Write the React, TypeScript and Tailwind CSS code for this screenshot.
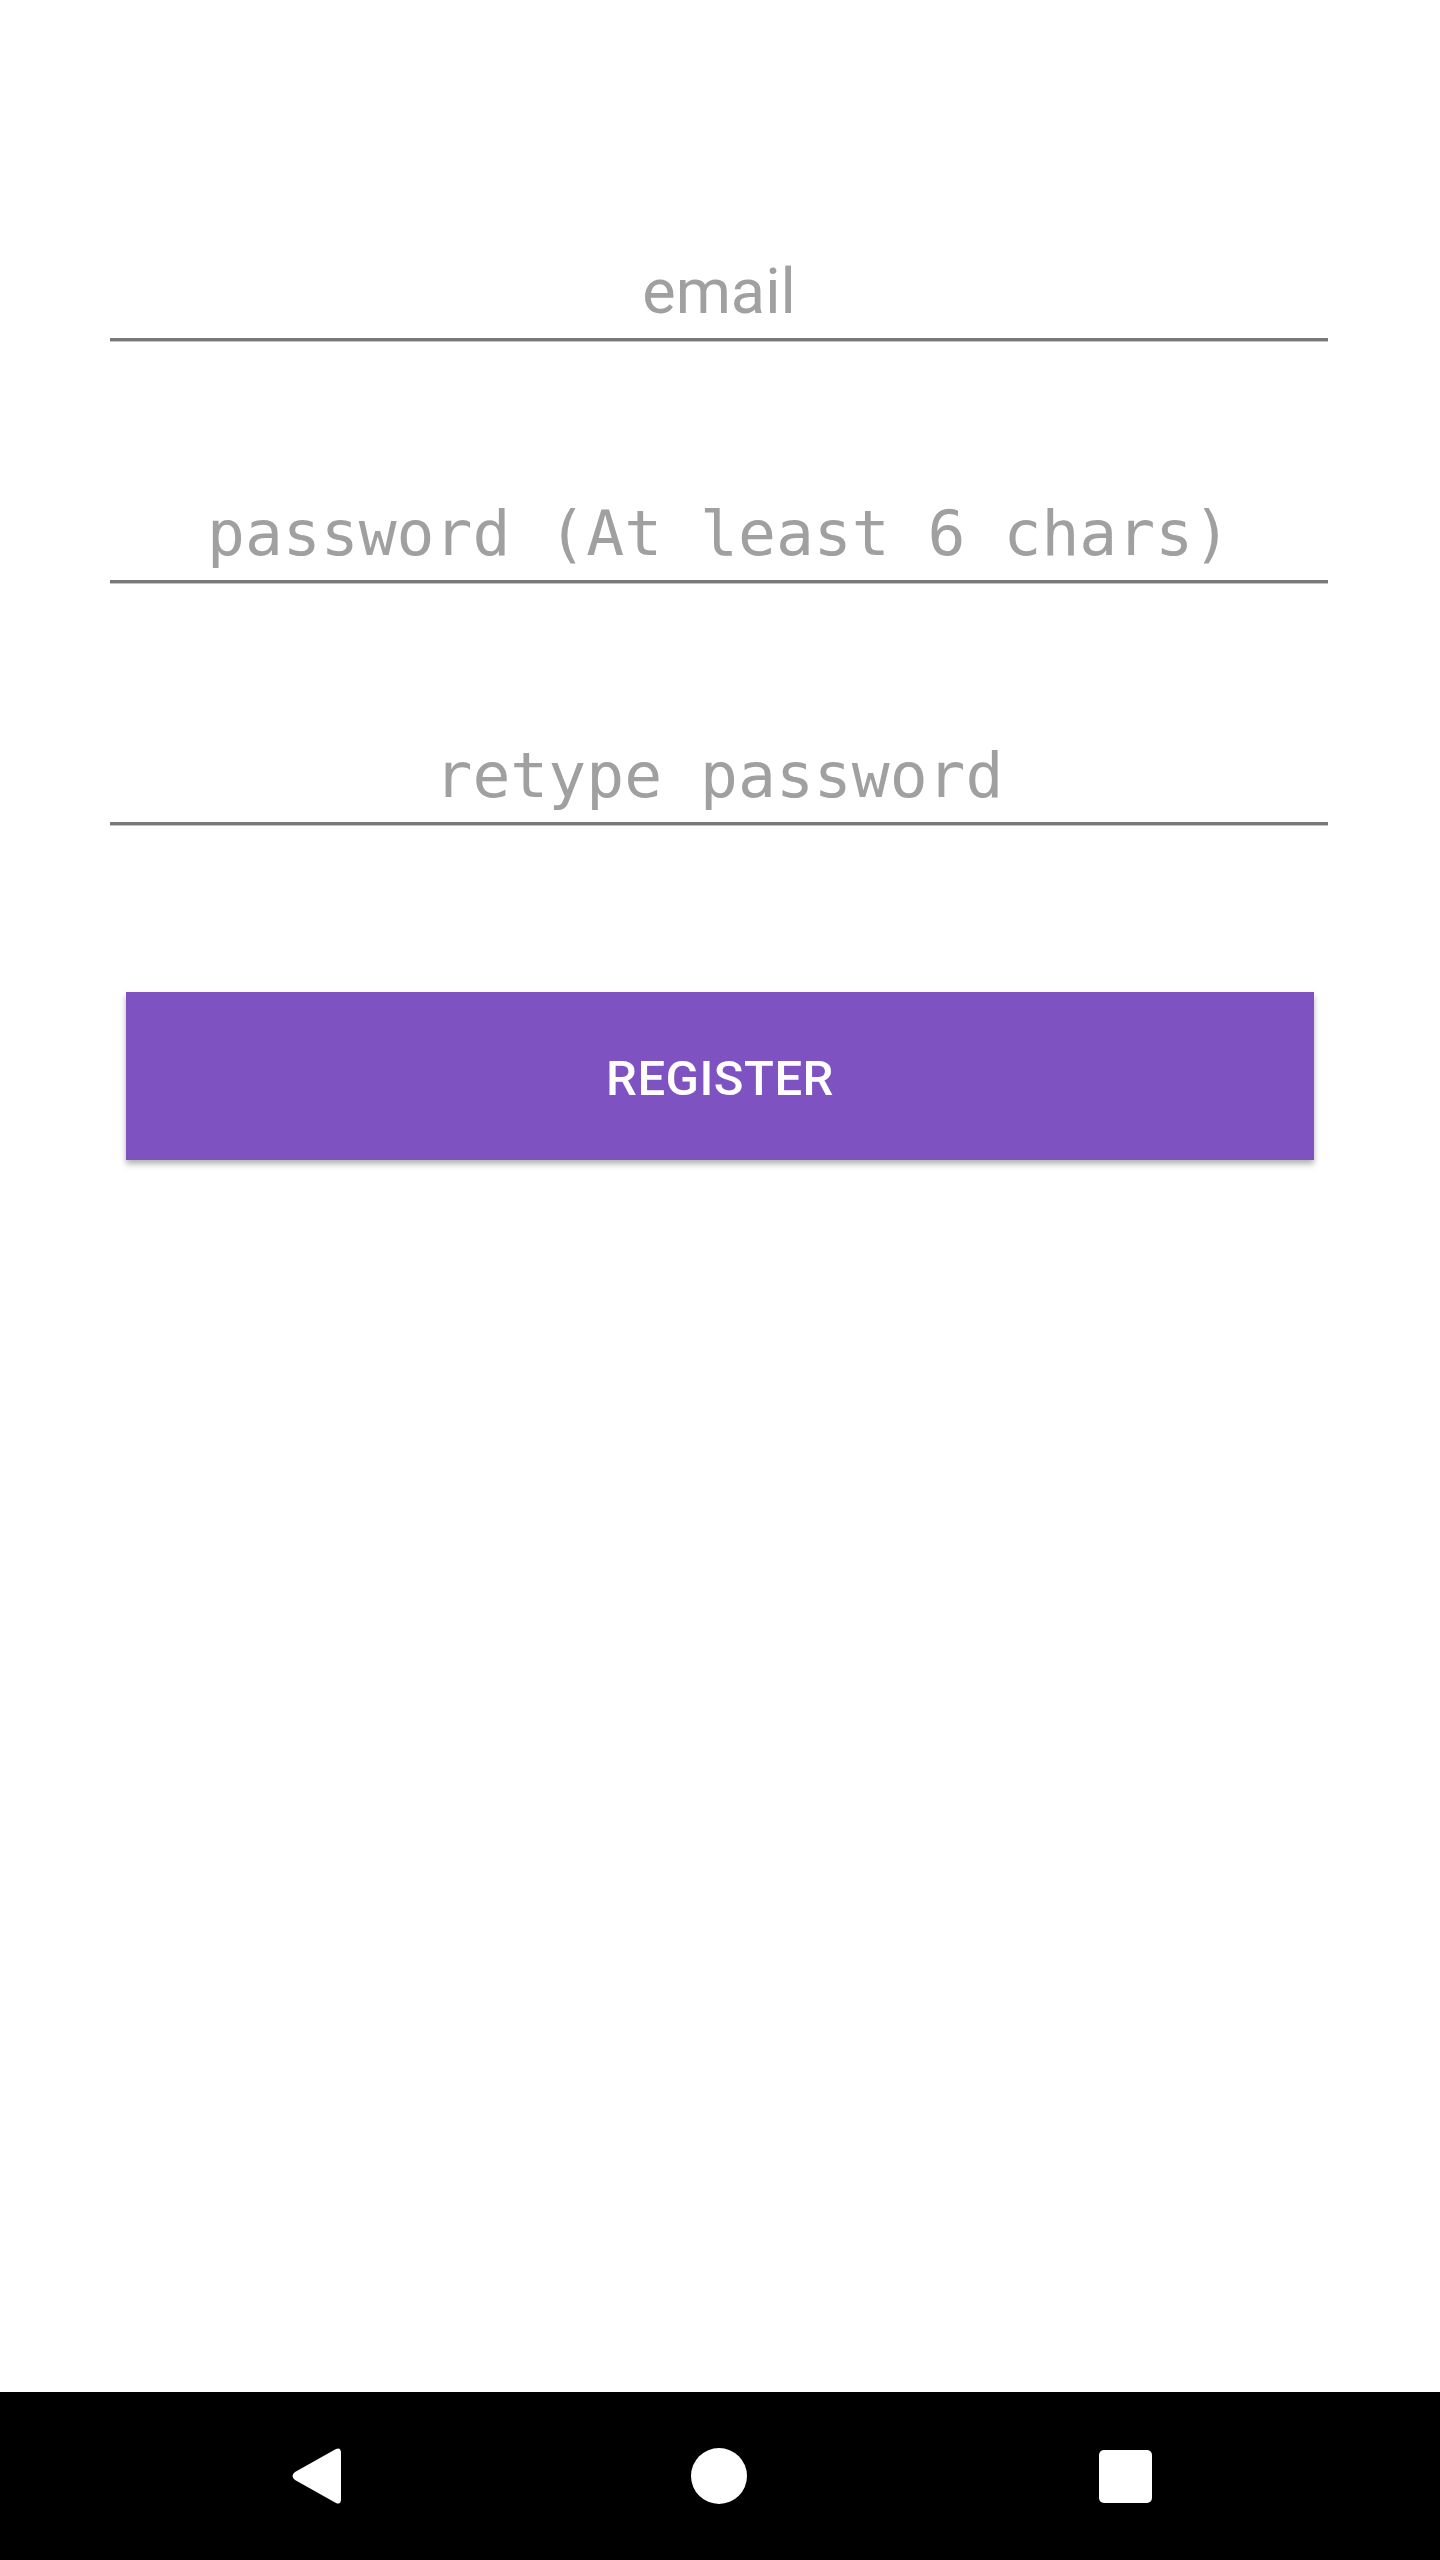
import { ReactNode } from 'react'

function Field({ children, mono }: { children: ReactNode; mono?: boolean }) {
  const font = mono
    ? "font-['DejaVu_Sans_Mono',monospace]"
    : "font-['Roboto',sans-serif]"

  return (
    <div className="h-[242px] flex flex-col justify-end">
      <div
        className={
          font +
          ' text-[63px] leading-[75px] text-[#a0a0a0] text-center whitespace-pre mb-[9px]'
        }
      >
        {children}
      </div>
      <div className="h-[3px] bg-[#797979]"></div>
      <div className="h-px bg-[#c4c4c4]"></div>
    </div>
  )
}

function NavBar() {
  return (
    <div className="h-[168px] bg-black flex flex-row items-center">
      <div className="w-[291px]"></div>
      <svg width="50" height="56" viewBox="0 0 50 56">
        <path
          d="M45 1 Q50 -1 50 5 L50 51 Q50 57 45 55 L4 32 Q-1 28 4 24 Z"
          fill="white"
        />
      </svg>
      <div className="w-[350px]"></div>
      <div className="w-[56px] h-[56px] rounded-full bg-white"></div>
      <div className="w-[352px]"></div>
      <div className="w-[53px] h-[53px] rounded-[5px] bg-white"></div>
    </div>
  )
}

export default function App() {
  return (
    <div className="min-h-[2560px] w-full bg-white flex flex-col">
      <div className="pt-[100px] pl-[110px] pr-[112px]">
        <Field>email</Field>
        <Field mono>password (At least 6 chars)</Field>
        <Field mono>retype password</Field>
      </div>

      <div className="pt-[166px] pl-[126px] pr-[126px]">
        <button className="w-full h-[168px] pt-[6px] bg-[#7f52c2] shadow-[0_4px_6px_rgba(0,0,0,0.3)] flex items-center justify-center">
          <span className="font-['Roboto',sans-serif] font-medium text-[49px] text-white tracking-[0.5px]">
            REGISTER
          </span>
        </button>
      </div>

      <div className="flex-1"></div>
      <NavBar />
    </div>
  )
}
